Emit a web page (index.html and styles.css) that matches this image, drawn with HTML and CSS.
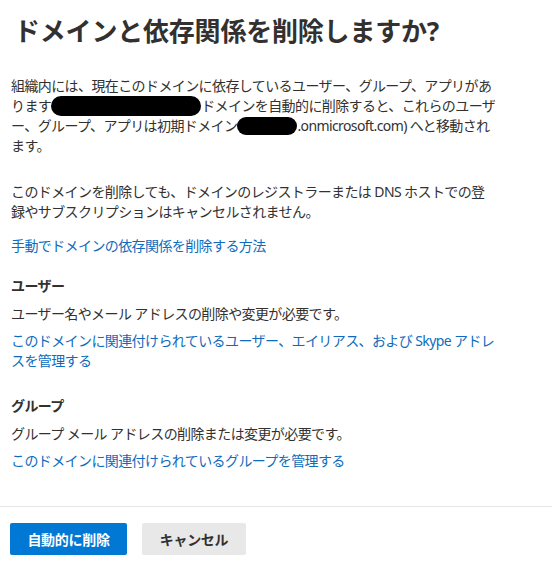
FILE: index.html
```html
<!DOCTYPE html>
<html lang="ja">
<head>
    <meta charset="utf-8">
    <title>ドメインの削除</title>
    <link rel="stylesheet" href="styles.css">
</head>
<body>
    <div class="panel">
        <div class="content">
            <h1>ドメインと依存関係を削除しますか?</h1>

            <p class="intro">
                組織内には、現在このドメインに依存しているユーザー、グループ、アプリがあります<span class="redact redact-long"></span>ドメインを自動的に削除すると、これらのユーザー、グループ、アプリは初期ドメイン<span class="redact redact-short"></span>.onmicrosoft.com) へと移動されます。
            </p>

            <p class="note">
                このドメインを削除しても、ドメインのレジストラーまたは DNS ホストでの登録やサブスクリプションはキャンセルされません。
            </p>

            <a class="link how-to" href="#">手動でドメインの依存関係を削除する方法</a>

            <div class="section">
                <h2>ユーザー</h2>
                <p>ユーザー名やメール アドレスの削除や変更が必要です。</p>
                <a class="link" href="#">このドメインに関連付けられているユーザー、エイリアス、および Skype アドレスを管理する</a>
            </div>

            <div class="section">
                <h2>グループ</h2>
                <p>グループ メール アドレスの削除または変更が必要です。</p>
                <a class="link" href="#">このドメインに関連付けられているグループを管理する</a>
            </div>
        </div>

        <div class="footer">
            <button class="primary">自動的に削除</button>
            <button class="secondary">キャンセル</button>
        </div>
    </div>
</body>
</html>
```

FILE: styles.css
```css
:root {
    --text: #323130;
    --link: #0f6cbd;
    --primary: #0078d4;
    --secondary: #e8e8e8;
    --divider: #e6e6e6;
}

body {
    margin: 0;
    background: #fff;
    color: var(--text);
    font-family: "Noto Sans", "Noto Sans CJK JP", sans-serif;
    font-size: 14px;
    line-height: 20px;
    letter-spacing: -0.6px;
}

.panel {
    width: 552px;
}

.content {
    width: 485px;
    padding: 13px 0 0 11px;
}

h1 {
    margin: 0 0 27px 3px;
    font-size: 26px;
    line-height: 36px;
    font-weight: 700;
    letter-spacing: -0.2px;
}

p {
    margin: 0;
}

.intro {
    margin-bottom: 26px;
}

.note {
    margin-bottom: 14px;
}

.redact {
    display: inline-block;
    vertical-align: -5px;
    height: 20px;
    background: #000;
    border-radius: 10px;
}

.redact-long {
    width: 150px;
}

.redact-short {
    width: 60px;
    height: 18px;
    vertical-align: -4px;
}

.link {
    display: block;
    color: var(--link);
    text-decoration: none;
}

.section {
    margin-top: 20px;
}

.section + .section {
    margin-top: 25px;
}

h2 {
    margin: 0 0 8px;
    font-size: 14px;
    line-height: 20px;
    font-weight: 700;
}

.section p {
    margin-bottom: 7px;
}

.footer {
    margin-top: 35px;
    border-top: 1px solid var(--divider);
    padding: 16px 0 0 10px;
    display: flex;
    gap: 15px;
}

button {
    height: 32px;
    border: none;
    border-radius: 2px;
    font-family: inherit;
    font-size: 14px;
    font-weight: 700;
    letter-spacing: -0.3px;
    cursor: pointer;
}

button.primary {
    width: 117px;
    background: var(--primary);
    color: #fff;
}

button.secondary {
    width: 104px;
    background: var(--secondary);
    color: var(--text);
}
```
